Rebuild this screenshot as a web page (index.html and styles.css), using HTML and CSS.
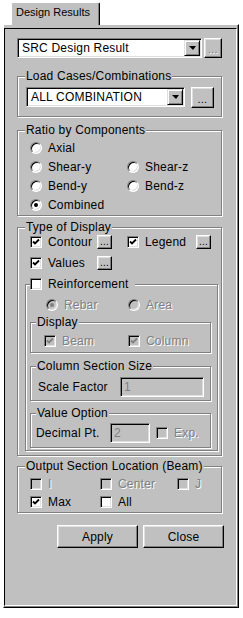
FILE: index.html
```html
<!DOCTYPE html>
<html lang="en">
<head>
  <meta charset="UTF-8" />
  <meta name="viewport" content="width=device-width, initial-scale=1.0" />
  <title>Design Results</title>
  <link rel="stylesheet" href="styles.css">
</head>
<body>
  <div class="tab">Design Results</div>
  <div class="page">
    <div class="panel">

      <div class="combo-row">
        <div class="combo combo-main">
          <span class="combo-text">SRC Design Result</span>
          <span class="drop"><span class="arrow"></span></span>
        </div>
        <button class="btn btn-more" disabled>...</button>
      </div>

      <fieldset class="group group-load">
        <legend>Load Cases/Combinations</legend>
        <div class="combo-row load-row">
          <div class="combo combo-load">
            <span class="combo-text">ALL COMBINATION</span>
            <span class="drop"><span class="arrow"></span></span>
          </div>
          <button class="btn btn-more btn-load">...</button>
        </div>
      </fieldset>

      <fieldset class="group group-ratio">
        <legend>Ratio by Components</legend>
        <div class="radio-grid">
          <label class="opt"><span class="radio"></span>Axial</label>
          <span></span>
          <label class="opt"><span class="radio"></span>Shear-y</label>
          <label class="opt"><span class="radio"></span>Shear-z</label>
          <label class="opt"><span class="radio"></span>Bend-y</label>
          <label class="opt"><span class="radio"></span>Bend-z</label>
          <label class="opt"><span class="radio on"></span>Combined</label>
        </div>
      </fieldset>

      <fieldset class="group group-type">
        <legend>Type of Display</legend>
        <div class="tool-grid">
          <label class="opt"><span class="check on"><svg viewBox="0 0 8 8"><path d="M1 3.5 L3 5.5 L7 1.5"/></svg></span>Contour</label>
          <button class="btn btn-tiny">...</button>
          <label class="opt"><span class="check on"><svg viewBox="0 0 8 8"><path d="M1 3.5 L3 5.5 L7 1.5"/></svg></span>Legend</label>
          <button class="btn btn-tiny">...</button>
          <label class="opt"><span class="check on"><svg viewBox="0 0 8 8"><path d="M1 3.5 L3 5.5 L7 1.5"/></svg></span>Values</label>
          <button class="btn btn-tiny">...</button>
        </div>

        <fieldset class="group group-reinf">
          <legend class="check-legend"><span class="check"></span>Reinforcement</legend>
          <div class="pair-row rebar-row">
            <label class="opt off"><span class="radio on dim"></span>Rebar</label>
            <label class="opt off"><span class="radio dim"></span>Area</label>
          </div>

          <fieldset class="group sub group-show">
            <legend>Display</legend>
            <div class="pair-row show-row">
              <label class="opt off"><span class="check on dim"><svg viewBox="0 0 8 8"><path d="M1 3.5 L3 5.5 L7 1.5"/></svg></span>Beam</label>
              <label class="opt off"><span class="check on dim"><svg viewBox="0 0 8 8"><path d="M1 3.5 L3 5.5 L7 1.5"/></svg></span>Column</label>
            </div>
          </fieldset>

          <fieldset class="group sub group-size">
            <legend>Column Section Size</legend>
            <div class="field-row size-row">
              <span class="field-label scale-label">Scale Factor</span>
              <span class="field scale-field">1</span>
            </div>
          </fieldset>

          <fieldset class="group sub group-value">
            <legend>Value Option</legend>
            <div class="field-row value-row">
              <span class="field-label decimal-label">Decimal Pt.</span>
              <span class="field decimal-field">2</span>
              <label class="opt off exp"><span class="check dim"></span>Exp.</label>
            </div>
          </fieldset>
        </fieldset>
      </fieldset>

      <fieldset class="group group-output">
        <legend>Output Section Location (Beam)</legend>
        <div class="loc-grid">
          <label class="opt off"><span class="check dim"></span>I</label>
          <label class="opt off"><span class="check dim"></span>Center</label>
          <label class="opt off"><span class="check dim"></span>J</label>
          <label class="opt"><span class="check on"><svg viewBox="0 0 8 8"><path d="M1 3.5 L3 5.5 L7 1.5"/></svg></span>Max</label>
          <label class="opt"><span class="check"></span>All</label>
        </div>
      </fieldset>

      <div class="actions">
        <button class="btn btn-action">Apply</button>
        <button class="btn btn-action">Close</button>
      </div>

    </div>
  </div>
</body>
</html>
```

FILE: styles.css
```css
body {
  margin: 0;
  background: #fff;
  font-family: "Liberation Sans", Arial, sans-serif;
  font-size: 12px;
  letter-spacing: 0.2px;
  color: #000;
}

/* tab header, drawn over the page's top edge */
.tab {
  position: relative;
  z-index: 1;
  box-sizing: border-box;
  width: 89px;
  height: 23px;
  margin: 2px 0 -1px 11px;
  padding: 3px 0 0 4px;
  background: #c0c0c0;
  border-top: 1px solid #fff;
  border-left: 1px solid #fff;
  border-right: 1px solid #000;
  border-radius: 2px 2px 0 0;
  box-shadow: inset -1px 0 0 #808080;
  font-size: 11px;
  line-height: 13px;
  letter-spacing: 0;
}
.page {
  box-sizing: border-box;
  display: flex;
  flex-direction: column;
  width: 236px;
  height: 584px;
  margin-left: 3px;
  padding: 3px 1px 1px 0;
  background: #c0c0c0;
  border: 1px solid;
  border-color: #fff #000 #000 #fff;
  box-shadow: inset -1px -1px 0 #808080;
}
.panel {
  flex: 1;
  padding: 9px 0 0 12px;
  border: 1px solid;
  border-color: #000 #fff #fff #000;
}

/* group boxes */
.group {
  box-sizing: border-box;
  width: 205px;
  min-width: 0;
  margin: 0;
  padding: 0;
  border: 1px solid #808080;
  box-shadow: inset 1px 1px 0 #fff, 1px 1px 0 #fff;
}
.group legend {
  margin-left: 7px;
  padding: 0 1px;
  line-height: 14px;
  background: #c0c0c0;
}
.group.sub {
  width: 181px;
  margin-left: 4px;
}
.group.sub legend {
  margin-left: 5px;
}

/* combo boxes */
.combo-row {
  display: flex;
  align-items: flex-start;
  gap: 2px;
}
.combo {
  box-sizing: border-box;
  display: flex;
  align-items: center;
  height: 20px;
  padding: 1px;
  background: #fff;
  border: 1px solid;
  border-color: #808080 #fff #fff #808080;
  box-shadow: inset 1px 1px 0 #000, inset -1px -1px 0 #dfdfdf;
}
.combo-text {
  flex: 1;
  padding-left: 3px;
  line-height: 16px;
  white-space: nowrap;
}
.drop {
  box-sizing: border-box;
  display: flex;
  align-items: center;
  justify-content: center;
  width: 16px;
  height: 16px;
  background: #c0c0c0;
  border: 1px solid;
  border-color: #dfdfdf #000 #000 #dfdfdf;
  box-shadow: inset 1px 1px 0 #fff, inset -1px -1px 0 #808080;
}
.arrow {
  width: 0;
  height: 0;
  border-top: 4px solid #000;
  border-left: 4px solid transparent;
  border-right: 3px solid transparent;
}
.combo-main {
  width: 185px;
}
.combo-load {
  width: 159px;
}

/* buttons */
.btn {
  box-sizing: border-box;
  margin: 0;
  padding: 0;
  background: #c0c0c0;
  border: 1px solid;
  border-color: #fff #000 #000 #fff;
  box-shadow: inset -1px -1px 0 #808080, inset 1px 1px 0 #dfdfdf;
  font-family: inherit;
  font-size: 12px;
  letter-spacing: inherit;
  color: #000;
}
.btn:disabled {
  color: #808080;
  text-shadow: 1px 1px 0 #fff;
}
.btn-more {
  width: 18px;
  height: 20px;
  font-size: 11px;
  line-height: 11px;
  padding-top: 3px;
}
.btn-load {
  width: 23px;
  height: 21px;
}
.btn-tiny {
  width: 15px;
  height: 14px;
  font-size: 10px;
  line-height: 8px;
  padding-top: 1px;
}
.btn-action {
  width: 81px;
  height: 23px;
}

/* options */
.opt {
  display: flex;
  align-items: center;
  gap: 6px;
  white-space: nowrap;
}
.opt.off {
  color: #808080;
  text-shadow: 1px 1px 0 #fff;
}
.radio,
.check {
  box-sizing: border-box;
  display: flex;
  align-items: center;
  justify-content: center;
  flex: none;
  width: 12px;
  height: 12px;
  background: #fff;
  border: 1px solid;
  border-color: #808080 #fff #fff #808080;
  box-shadow: inset 1px 1px 0 #000, inset -1px -1px 0 #dfdfdf;
  text-shadow: none;
}
.radio {
  border-radius: 50%;
}
.radio.on::after {
  content: "";
  width: 4px;
  height: 4px;
  border-radius: 50%;
  background: #000;
}
.radio.dim,
.check.dim {
  background: #c0c0c0;
}
.radio.on.dim::after {
  background: #808080;
}
.check svg {
  width: 8px;
  height: 8px;
  fill: none;
  stroke: #000;
  stroke-width: 1.8;
}
.check.dim svg {
  stroke: #808080;
}

/* load cases */
.group-load {
  margin-top: 11px;
  padding: 4px 0 8px;
}
.load-row {
  gap: 6px;
  padding-left: 8px;
}

/* ratio */
.group-ratio {
  margin-top: 6px;
  padding: 1px 0 1px;
}
.radio-grid {
  display: grid;
  grid-template-columns: 97px auto;
  grid-auto-rows: 19px;
  padding-left: 12px;
}

/* type of display */
.group-type {
  margin-top: 4px;
  padding: 0 0 4px;
}
.tool-grid {
  display: grid;
  grid-template-columns: 67px 30px 69px 15px;
  grid-auto-rows: 15px;
  row-gap: 6px;
  align-items: center;
  padding-left: 12px;
}
.group-reinf {
  width: 193px;
  margin: 7px 0 0 7px;
  padding: 6px 0 2px;
}
.group-reinf .check-legend {
  display: flex;
  align-items: center;
  gap: 6px;
  margin-left: 4px;
  padding: 0 6px 0 0;
}
.pair-row {
  display: grid;
  height: 15px;
  align-items: center;
}
.rebar-row {
  grid-template-columns: 82px auto;
  padding-left: 20px;
}
.group-show {
  margin-top: 3px;
  padding: 4px 0;
}
.show-row {
  grid-template-columns: 84px auto;
  padding-left: 13px;
}
.field-row {
  display: flex;
  align-items: center;
  height: 20px;
}
.field {
  box-sizing: border-box;
  height: 20px;
  padding: 1px 3px;
  line-height: 16px;
  color: #808080;
  background: #c0c0c0;
  border: 1px solid;
  border-color: #808080 #fff #fff #808080;
  box-shadow: inset 1px 1px 0 #000, inset -1px -1px 0 #dfdfdf;
}
.group-size {
  margin-top: 6px;
  padding: 4px 0 3px;
}
.size-row {
  padding-left: 7px;
}
.scale-label {
  width: 82px;
}
.scale-field {
  width: 84px;
}
.group-value {
  margin-top: 5px;
  padding: 3px 0 4px;
}
.value-row {
  padding-left: 5px;
}
.decimal-label {
  width: 74px;
}
.decimal-field {
  width: 40px;
}
.exp {
  margin-left: 6px;
}

/* output section */
.group-output {
  margin-top: 3px;
  padding: 3px 0 3px;
}
.loc-grid {
  display: grid;
  grid-template-columns: 70px 77px auto;
  grid-auto-rows: 15px;
  row-gap: 3px;
  align-items: center;
  padding-left: 12px;
}

.actions {
  display: flex;
  gap: 5px;
  margin-top: 12px;
  padding-left: 40px;
}
```
